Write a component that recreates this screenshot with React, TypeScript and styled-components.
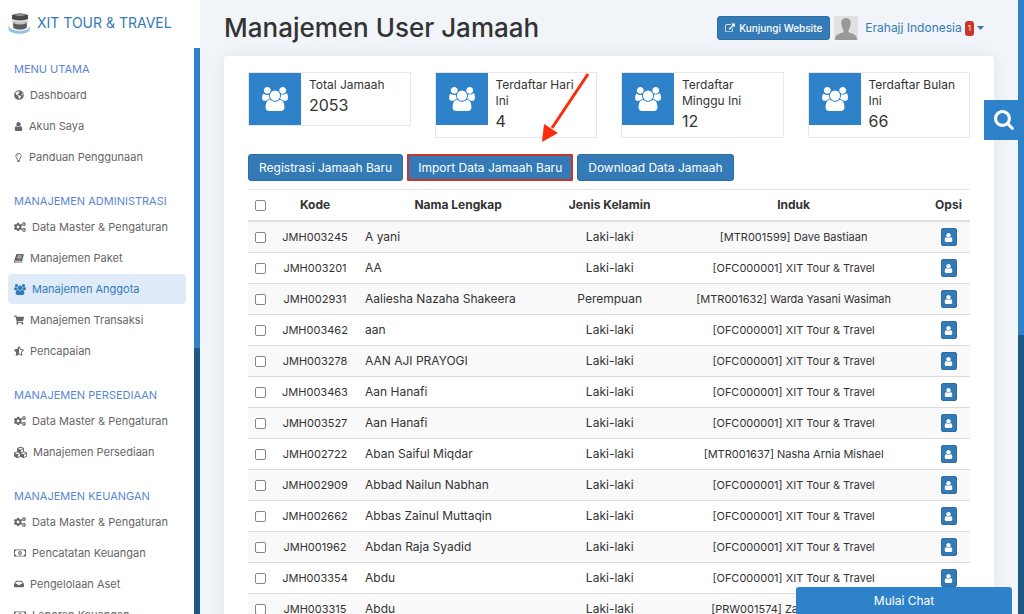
import React from "react";
import styled, { createGlobalStyle, css } from "styled-components";
import {
  FaCogs,
  FaCubes,
  FaGlobeAmericas,
  FaInbox,
  FaRegLightbulb,
  FaRegMoneyBillAlt,
  FaShoppingCart,
  FaStarHalfAlt,
} from "react-icons/fa";

const blue = "#2d82ca";
const buttonBlue = "#337ab7";
const darkBlue = "#1c5a85";

const GlobalStyle = createGlobalStyle`
  * { box-sizing: border-box; }
  html, body { margin: 0; overflow: hidden; }
  body {
    background: #f1f5f9;
    color: #333;
    font-family: Inter, "Noto Sans", sans-serif;
    font-size: 12px;
    line-height: 16px;
  }
  button, input { font-family: inherit; }
  button { cursor: pointer; }
  a { text-decoration: none; }
`;

const Shell = styled.div`
  display: flex;
  height: 100vh;
  overflow: hidden;
`;

const Sidebar = styled.aside`
  flex: 0 0 200px;
  min-width: 0;
  display: flex;
  flex-direction: column;
  background: #fff;
`;

const Brand = styled.a`
  flex: 0 0 48px;
  display: flex;
  align-items: center;
  gap: 5px;
  padding: 0 8px 2px;
  color: ${buttonBlue};
  font-size: 14px;
  white-space: nowrap;
`;

const SidebarBody = styled.div`
  flex: 1;
  min-height: 0;
  display: flex;
`;

const Menu = styled.nav`
  flex: 1;
  min-width: 0;
  overflow: hidden;
  padding: 10px 8px 0;
`;

const Track = styled.div`
  flex: 0 0 6px;
  background: ${darkBlue};
`;

const Thumb = styled.div<{ $size: number }>`
  height: ${(p) => p.$size}px;
  background: ${blue};
`;

const Section = styled.section`
  margin-bottom: 18px;
`;

const SectionTitle = styled.h2`
  margin: 0;
  padding: 0 6px;
  color: #5b87cf;
  font-size: 11px;
  font-weight: 400;
  line-height: 22px;
  white-space: nowrap;
`;

const MenuList = styled.ul`
  display: flex;
  flex-direction: column;
  gap: 1px;
  margin: 0;
  padding: 0;
  list-style: none;
`;

const MenuLink = styled.a<{ $active?: boolean }>`
  display: flex;
  align-items: center;
  gap: 6px;
  height: 30px;
  padding: 0 6px;
  border-radius: 4px;
  color: #666;
  font-size: 11px;
  white-space: nowrap;
  ${(p) =>
    p.$active &&
    css`
      background: #dfebf9;
      color: ${buttonBlue};
    `}
`;

const Main = styled.main`
  flex: 1;
  min-width: 0;
  padding: 0 24px;
`;

const Header = styled.header`
  display: flex;
  align-items: center;
  justify-content: space-between;
  height: 56px;
  padding-right: 10px;
`;

const Title = styled.h1`
  margin: 0;
  font-size: 26px;
  font-weight: 500;
  line-height: 32px;
  white-space: nowrap;
`;

const UserArea = styled.div`
  display: flex;
  align-items: center;
  gap: 4px;
`;

const Button = styled.button<{ $compact?: boolean; $marked?: boolean }>`
  display: inline-flex;
  align-items: center;
  justify-content: center;
  gap: 4px;
  height: ${(p) => (p.$compact ? 24 : 27)}px;
  padding: 0 ${(p) => (p.$compact ? 7 : 10)}px;
  border: 1px solid #2e6da4;
  border-radius: 3px;
  background: ${buttonBlue};
  color: #fff;
  font-size: ${(p) => (p.$compact ? 10 : 12)}px;
  font-weight: ${(p) => (p.$compact ? 500 : 400)};
  white-space: nowrap;
  ${(p) =>
    p.$marked &&
    css`
      border: 2px solid #c8352a;
      border-radius: 1px;
      padding: 0 9px;
    `}
`;

const Account = styled.a`
  display: flex;
  align-items: center;
  gap: 3px;
  padding-left: 3px;
  color: ${buttonBlue};
  font-size: 12px;
`;

const Badge = styled.span`
  padding: 0 3px;
  border-radius: 3px;
  background: #cc3528;
  color: #fff;
  font-size: 8px;
  line-height: 15px;
`;

const Card = styled.section`
  padding: 16px 24px;
  border-radius: 4px;
  background: #fff;
  box-shadow: 0 0 14px rgba(60, 90, 120, 0.1);
`;

const Stats = styled.div`
  display: grid;
  grid-template-columns: repeat(4, 1fr);
  align-items: start;
  gap: 24px;
`;

const Stat = styled.div`
  display: flex;
  align-items: flex-start;
  border: 1px solid #e8e8e8;
`;

const StatIcon = styled.div`
  flex: 0 0 52px;
  height: 52px;
  display: flex;
  align-items: center;
  justify-content: center;
  background: ${blue};
  color: #fff;
`;

const StatText = styled.div`
  min-width: 0;
  padding: 4px 8px;
`;

const StatValue = styled.div`
  font-size: 16px;
  line-height: 24px;
`;

const Actions = styled.div`
  display: flex;
  gap: 4px;
  padding: 16px 0 8px;
`;

const Table = styled.table`
  width: 100%;
  table-layout: fixed;
  border-collapse: separate;
  border-spacing: 0;
  font-size: 12px;
`;

const HeadCell = styled.th`
  height: 33px;
  padding: 0;
  border-top: 1px solid #e3e3e3;
  border-bottom: 2px solid #e0e0e0;
  font-weight: 700;
  white-space: nowrap;
`;

const Row = styled.tr`
  &:nth-child(odd) {
    background: #f9f9f9;
  }
`;

const Cell = styled.td<{ $left?: boolean; $code?: boolean }>`
  height: 31px;
  padding: 0 0 0 ${(p) => (p.$left ? 8 : 0)}px;
  border-bottom: 1px solid #ddd;
  font-size: ${(p) => (p.$code ? 11 : 12)}px;
  text-align: ${(p) => (p.$left ? "left" : "center")};
  white-space: nowrap;
`;

const Check = styled.input`
  appearance: none;
  display: block;
  width: 11px;
  height: 11px;
  margin: 0 auto;
  border: 1px solid #858585;
  border-radius: 2px;
  background: #fff;
`;

const RowButton = styled.button`
  display: flex;
  align-items: center;
  justify-content: center;
  width: 16px;
  height: 18px;
  margin: 0 auto;
  padding: 0;
  border: 1px solid #2e6da4;
  border-radius: 2px;
  background: ${buttonBlue};
  color: #fff;
`;

const SearchButton = styled.button`
  position: fixed;
  top: 100px;
  right: 0;
  display: flex;
  align-items: center;
  justify-content: center;
  width: 40px;
  height: 40px;
  padding: 0;
  border: 0;
  background: ${blue};
  color: #fff;
`;

const ChatButton = styled.button`
  position: fixed;
  right: 12px;
  bottom: 0;
  width: 216px;
  height: 27px;
  border: 0;
  border-radius: 3px 3px 0 0;
  background: ${blue};
  color: #fff;
  font-size: 12px;
`;

const Arrow = styled.svg`
  position: absolute;
  left: 540px;
  top: 70px;
  pointer-events: none;
`;

const UserIcon = ({ size }: { size: number }) => (
  <svg width={size} height={size} viewBox="128 0 1536 1536" fill="currentColor" aria-hidden="true">
    <path d="M1536 1271q0 109-62.500 187t-150.500 78h-854q-88 0-150.500-78t-62.500-187q0-85 8.500-160.500t31.500-152 58.500-131 94-89 134.500-34.500q131 128 313 128t313-128q76 0 134.500 34.500t94 89 58.500 131 31.500 152 8.500 160.500zm-256-887q0 159-112.500 271.500t-271.500 112.500-271.500-112.500-112.500-271.500 112.500-271.500 271.500-112.500 271.500 112.500 112.500 271.500z" />
  </svg>
);

const GroupIcon = ({ width, height }: { width: number; height: number }) => (
  <svg width={width} height={height} viewBox="64 0 1920 1792" fill="currentColor" aria-hidden="true">
    <path d="M657 896q-162 5-265 128h-134q-82 0-138-40.5t-56-118.5q0-353 124-353 6 0 43.5 21t97.5 42.5 119 21.5q67 0 133-23-5 37-5 66 0 159 90 293zm1071 637q0 120-73 189.5t-194 69.5h-874q-121 0-194-69.5t-73-189.5q0-53 3.5-103.5t14-109 26.5-108.5 43-97.5 62-81 85.5-53.5 111.5-20q10 0 43 21.5t73 48 107 48 135 21.5 135-21.5 107-48 73-48 43-21.5q61 0 111.5 20t85.5 53.5 62 81 43 97.5 26.5 108.5 14 109 3.5 103.5zm-1024-1277q0 106-75 181t-181 75-181-75-75-181 75-181 181-75 181 75 75 181zm704 384q0 159-112.5 271.5t-271.5 112.5-271.5-112.5-112.5-271.5 112.5-271.5 271.5-112.5 271.5 112.5 112.5 271.5zm576 225q0 78-56 118.5t-138 40.5h-134q-103-123-265-128 90-134 90-293 0-29-5-66 66 23 133 23 59 0 119-21.5t97.5-42.5 43.5-21q124 0 124 353zm-128-609q0 106-75 181t-181 75-181-75-75-181 75-181 181-75 181 75 75 181z" />
  </svg>
);

const SearchIcon = () => (
  <svg width="20" height="20" viewBox="64 128 1664 1664" fill="currentColor" aria-hidden="true">
    <path d="M1216 832q0-185-131.5-316.5t-316.5-131.5-316.5 131.5-131.5 316.5 131.5 316.5 316.5 131.5 316.5-131.5 131.5-316.5zm512 832q0 52-38 90t-90 38q-54 0-90-38l-343-342q-179 124-399 124-143 0-273.5-55.5t-225-150-150-225-55.5-273.5 55.5-273.5 150-225 225-150 273.5-55.5 273.5 55.5 225 150 150 225 55.5 273.5q0 220-124 399l343 343q37 37 37 90z" />
  </svg>
);

const ExternalIcon = () => (
  <svg width="10" height="10" viewBox="0 0 1792 1600" fill="currentColor" aria-hidden="true">
    <path d="M1408 928v320q0 119-84.5 203.5t-203.5 84.5h-832q-119 0-203.5-84.5t-84.5-203.5v-832q0-119 84.5-203.5t203.5-84.5h704q14 0 23 9t9 23v64q0 14-9 23t-23 9h-704q-66 0-113 47t-47 113v832q0 66 47 113t113 47h832q66 0 113-47t47-113v-320q0-14 9-23t23-9h64q14 0 23 9t9 23zm384-864v512q0 26-19 45t-45 19-45-19l-176-176-652 652q-10 10-23 10t-23-10l-114-114q-10-10-10-23t10-23l652-652-176-176q-19-19-19-45t19-45 45-19h512q26 0 45 19t19 45z" />
  </svg>
);

const BookIcon = () => (
  <svg width="10" height="9" viewBox="0 0 20 18" aria-hidden="true">
    <path
      d="M6 0 H18 Q20 0 19.500 2 L16 14 Q15 16 13 16 H3 Q2 16 3 17 H14 Q16 17 17 15 L20 5 L17 16 Q16 18 14 18 H3 Q0 18 0 15 L4 2 Q5 0 6 0 Z"
      fill="currentColor"
    />
    <path d="M7.500 4 H15.500 M6.500 7.500 H14.500" stroke="#fff" strokeWidth="1.400" />
    <path d="M2 14.500 H14" stroke="#fff" strokeWidth="1.400" />
  </svg>
);

const CaretIcon = () => (
  <svg width="7" height="4" viewBox="0 0 7 4" aria-hidden="true">
    <path d="M0 0 H7 L3.500 4 Z" fill="currentColor" />
  </svg>
);

const Logo = () => (
  <svg width="24" height="24" viewBox="0 0 24 24" aria-hidden="true">
    <path d="M0 15 Q0 20 4 21.500 Q12 24 19 21.500 Q22 20 22.500 15 L20 18 Q12 22 3 18 Z" fill="#8fc0ec" />
    <path d="M4 4 Q12 0 20 4 L19 17 Q12 21 5 17 Z" fill="#c4c4c4" />
    <path d="M4 4 Q12 1 20 4 L20 8 Q12 11 4 8 Z" fill="#4a4a4a" />
    <path d="M6 4 Q12 2 18 4 Q12 6 6 4 Z" fill="#999" />
    <path d="M5 12 Q12 15 19 12 L18.500 17 Q12 20 5.500 17 Z" fill="#5c5c5c" />
    <path d="M4 9 Q12 12 20 9" fill="none" stroke="#eee" strokeWidth="1" />
  </svg>
);

const Avatar = () => (
  <svg width="24" height="24" viewBox="0 0 24 24" role="img" aria-label="Foto profil">
    <rect width="24" height="24" fill="#e1e1e1" />
    <path d="M12 2 C8 2 7 5 7.500 9 C8 12 9 13 9.500 14 L9.500 16 C7 18 1 17 1 24 H23 C23 17 17 18 14.500 16 L14.500 14 C15 13 16 12 16.500 9 C17 5 16 2 12 2 Z" fill="#999" />
  </svg>
);

type Item = { label: string; icon: React.ReactNode; active?: boolean };

const cogs = <FaCogs size={12} />;
const money = <FaRegMoneyBillAlt size={12} />;

const sections: { title: string; items: Item[] }[] = [
  {
    title: "MENU UTAMA",
    items: [
      { label: "Dashboard", icon: <FaGlobeAmericas size={10} /> },
      { label: "Akun Saya", icon: <UserIcon size={9} /> },
      { label: "Panduan Penggunaan", icon: <FaRegLightbulb size={9} /> },
    ],
  },
  {
    title: "MANAJEMEN ADMINISTRASI",
    items: [
      { label: "Data Master & Pengaturan", icon: cogs },
      { label: "Manajemen Paket", icon: <BookIcon /> },
      { label: "Manajemen Anggota", icon: <GroupIcon width={12} height={11} />, active: true },
      { label: "Manajemen Transaksi", icon: <FaShoppingCart size={10} /> },
      { label: "Pencapaian", icon: <FaStarHalfAlt size={10} /> },
    ],
  },
  {
    title: "MANAJEMEN PERSEDIAAN",
    items: [
      { label: "Data Master & Pengaturan", icon: cogs },
      { label: "Manajemen Persediaan", icon: <FaCubes size={13} /> },
    ],
  },
  {
    title: "MANAJEMEN KEUANGAN",
    items: [
      { label: "Data Master & Pengaturan", icon: cogs },
      { label: "Pencatatan Keuangan", icon: money },
      { label: "Pengelolaan Aset", icon: <FaInbox size={10} /> },
      { label: "Laporan Keuangan", icon: money },
    ],
  },
];

const stats = [
  ["Total Jamaah", "2053"],
  ["Terdaftar Hari Ini", "4"],
  ["Terdaftar Minggu Ini", "12"],
  ["Terdaftar Bulan Ini", "66"],
];

const office = "[OFC000001] XIT Tour & Travel";

const members = [
  ["JMH003245", "A yani", "Laki-laki", "[MTR001599] Dave Bastiaan"],
  ["JMH003201", "AA", "Laki-laki", office],
  ["JMH002931", "Aaliesha Nazaha Shakeera", "Perempuan", "[MTR001632] Warda Yasani Wasimah"],
  ["JMH003462", "aan", "Laki-laki", office],
  ["JMH003278", "AAN AJI PRAYOGI", "Laki-laki", office],
  ["JMH003463", "Aan Hanafi", "Laki-laki", office],
  ["JMH003527", "Aan Hanafi", "Laki-laki", office],
  ["JMH002722", "Aban Saiful Miqdar", "Laki-laki", "[MTR001637] Nasha Arnia Mishael"],
  ["JMH002909", "Abbad Nailun Nabhan", "Laki-laki", office],
  ["JMH002662", "Abbas Zainul Muttaqin", "Laki-laki", office],
  ["JMH001962", "Abdan Raja Syadid", "Laki-laki", office],
  ["JMH003354", "Abdu", "Laki-laki", office],
  ["JMH003315", "Abdu", "Laki-laki", "[PRW001574] Zalina Rahmawati"],
];

export default function App() {
  return (
    <>
      <GlobalStyle />
      <Shell>
        <Sidebar>
          <Brand href="#">
            <Logo />
            XIT TOUR &amp; TRAVEL
          </Brand>
          <SidebarBody>
            <Menu>
              {sections.map((section) => (
                <Section key={section.title}>
                  <SectionTitle>{section.title}</SectionTitle>
                  <MenuList>
                    {section.items.map((item) => (
                      <li key={item.label}>
                        <MenuLink href="#" $active={item.active}>
                          {item.icon}
                          {item.label}
                        </MenuLink>
                      </li>
                    ))}
                  </MenuList>
                </Section>
              ))}
            </Menu>
            <Track>
              <Thumb $size={300} />
            </Track>
          </SidebarBody>
        </Sidebar>

        <Main>
          <Header>
            <Title>Manajemen User Jamaah</Title>
            <UserArea>
              <Button $compact>
                <ExternalIcon />
                Kunjungi Website
              </Button>
              <Avatar />
              <Account href="#">
                Erahajj Indonesia
                <Badge>1</Badge>
                <CaretIcon />
              </Account>
            </UserArea>
          </Header>

          <Card>
            <Stats>
              {stats.map(([label, value]) => (
                <Stat key={label}>
                  <StatIcon>
                    <GroupIcon width={26} height={24} />
                  </StatIcon>
                  <StatText>
                    <div>{label}</div>
                    <StatValue>{value}</StatValue>
                  </StatText>
                </Stat>
              ))}
            </Stats>

            <Actions>
              <Button>Registrasi Jamaah Baru</Button>
              <Button $marked>Import Data Jamaah Baru</Button>
              <Button>Download Data Jamaah</Button>
            </Actions>

            <Table>
              <colgroup>
                <col width="25" />
                <col width="84" />
                <col width="28%" />
                <col width="14%" />
                <col />
                <col width="43" />
              </colgroup>
              <thead>
                <tr>
                  <HeadCell>
                    <Check type="checkbox" aria-label="Pilih semua" />
                  </HeadCell>
                  <HeadCell>Kode</HeadCell>
                  <HeadCell>Nama Lengkap</HeadCell>
                  <HeadCell>Jenis Kelamin</HeadCell>
                  <HeadCell>Induk</HeadCell>
                  <HeadCell>Opsi</HeadCell>
                </tr>
              </thead>
              <tbody>
                {members.map(([code, name, gender, parent]) => (
                  <Row key={code}>
                    <Cell>
                      <Check type="checkbox" aria-label={`Pilih ${code}`} />
                    </Cell>
                    <Cell $code>{code}</Cell>
                    <Cell $left>{name}</Cell>
                    <Cell>{gender}</Cell>
                    <Cell $code>{parent}</Cell>
                    <Cell>
                      <RowButton aria-label={`Profil ${name}`}>
                        <UserIcon size={9} />
                      </RowButton>
                    </Cell>
                  </Row>
                ))}
              </tbody>
            </Table>
          </Card>
        </Main>

        <Track>
          <Thumb $size={335} />
        </Track>
      </Shell>

      <Arrow width="50" height="76" viewBox="0 0 50 76" aria-hidden="true">
        <path d="M48 4 L12 58" stroke="#fb2b0c" strokeWidth="3" />
        <path d="M2 72 L4 54 L18 63 Z" fill="#fb2b0c" />
      </Arrow>
      <SearchButton aria-label="Cari">
        <SearchIcon />
      </SearchButton>
      <ChatButton>Mulai Chat</ChatButton>
    </>
  );
}
